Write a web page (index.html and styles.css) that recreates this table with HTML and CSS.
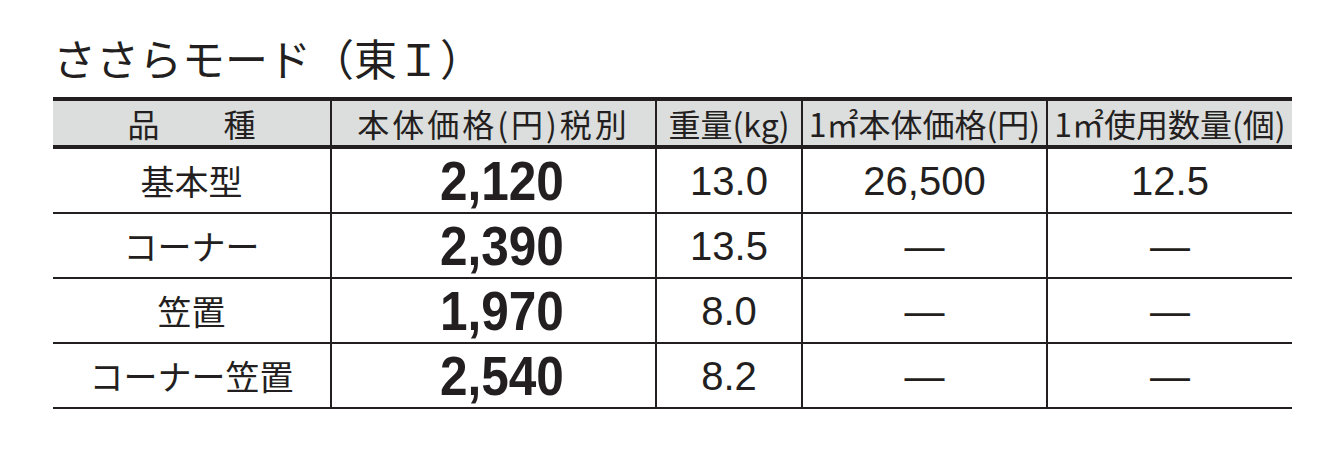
FILE: index.html
```html
<!DOCTYPE html>
<html lang="ja">
<head>
<meta charset="utf-8">
<title>ささらモード（東Ⅰ）</title>
<link rel="stylesheet" href="styles.css">
</head>
<body>
<main class="page">
  <h1 class="title">ささらモード（東Ｉ）</h1>
  <table class="spec">
    <colgroup>
      <col class="c1"><col class="c2"><col class="c3"><col class="c4"><col class="c5">
    </colgroup>
    <thead>
      <tr>
        <th>品　　種</th>
        <th class="wide">本体価格(円)税別</th>
        <th>重量(kg)</th>
        <th>1㎡本体価格(円)</th>
        <th>1㎡使用数量(個)</th>
      </tr>
    </thead>
    <tbody>
      <tr>
        <td class="name">基本型</td>
        <td class="price"><span class="cond">2,120</span></td>
        <td class="num">13.0</td>
        <td class="num">26,500</td>
        <td class="num">12.5</td>
      </tr>
      <tr>
        <td class="name">コーナー</td>
        <td class="price"><span class="cond">2,390</span></td>
        <td class="num">13.5</td>
        <td class="num">—</td>
        <td class="num">—</td>
      </tr>
      <tr>
        <td class="name">笠置</td>
        <td class="price"><span class="cond">1,970</span></td>
        <td class="num">8.0</td>
        <td class="num">—</td>
        <td class="num">—</td>
      </tr>
      <tr>
        <td class="name">コーナー笠置</td>
        <td class="price"><span class="cond">2,540</span></td>
        <td class="num">8.2</td>
        <td class="num">—</td>
        <td class="num">—</td>
      </tr>
    </tbody>
  </table>
</main>
</body>
</html>
```

FILE: styles.css
```css
html, body {
  margin: 0;
  padding: 0;
  background: #ffffff;
}

body {
  color: #231f20;
  font-family: "Noto Sans CJK JP", "Noto Sans", sans-serif;
}

.page {
  padding: 32px 0 0 53px;
}

.title {
  margin: 0;
  font-size: 43px;
  font-weight: 400;
  line-height: 50px;
  height: 50px;
  margin-bottom: 15px;
  letter-spacing: 0;
}

.spec {
  border-collapse: collapse;
  table-layout: fixed;
  width: 1239px;
}

.c1 { width: 278px; }
.c2 { width: 325px; }
.c3 { width: 146px; }
.c4 { width: 245px; }
.c5 { width: 245px; }

.spec th {
  background: #dcdddd;
  font-weight: 400;
  font-size: 32px;
  height: 44px;
  padding: 0;
  line-height: 44px;
  white-space: nowrap;
  border-top: 4px solid #231f20;
  border-bottom: 4px solid #231f20;
  border-left: 2px solid #231f20;
  border-right: 2px solid #231f20;
  text-align: center;
}

.spec th.wide {
  letter-spacing: 3px;
}

.spec td {
  height: 63px;
  padding: 0;
  line-height: 50px;
  text-align: center;
  white-space: nowrap;
  border-bottom: 2px solid #231f20;
  border-left: 2px solid #231f20;
  border-right: 2px solid #231f20;
}

.spec th:first-child,
.spec td:first-child {
  border-left: none;
}

.spec th:last-child,
.spec td:last-child {
  border-right: none;
}

.name {
  font-size: 34px;
}

.spec td.price {
  font-family: "Liberation Sans", Arial, sans-serif;
  font-weight: 700;
  font-size: 55px;
  padding-left: 16px;
}

.cond {
  display: inline-block;
  transform: scaleX(0.9);
}

.num {
  font-family: "Liberation Sans", Arial, sans-serif;
  font-size: 40px;
}
```
